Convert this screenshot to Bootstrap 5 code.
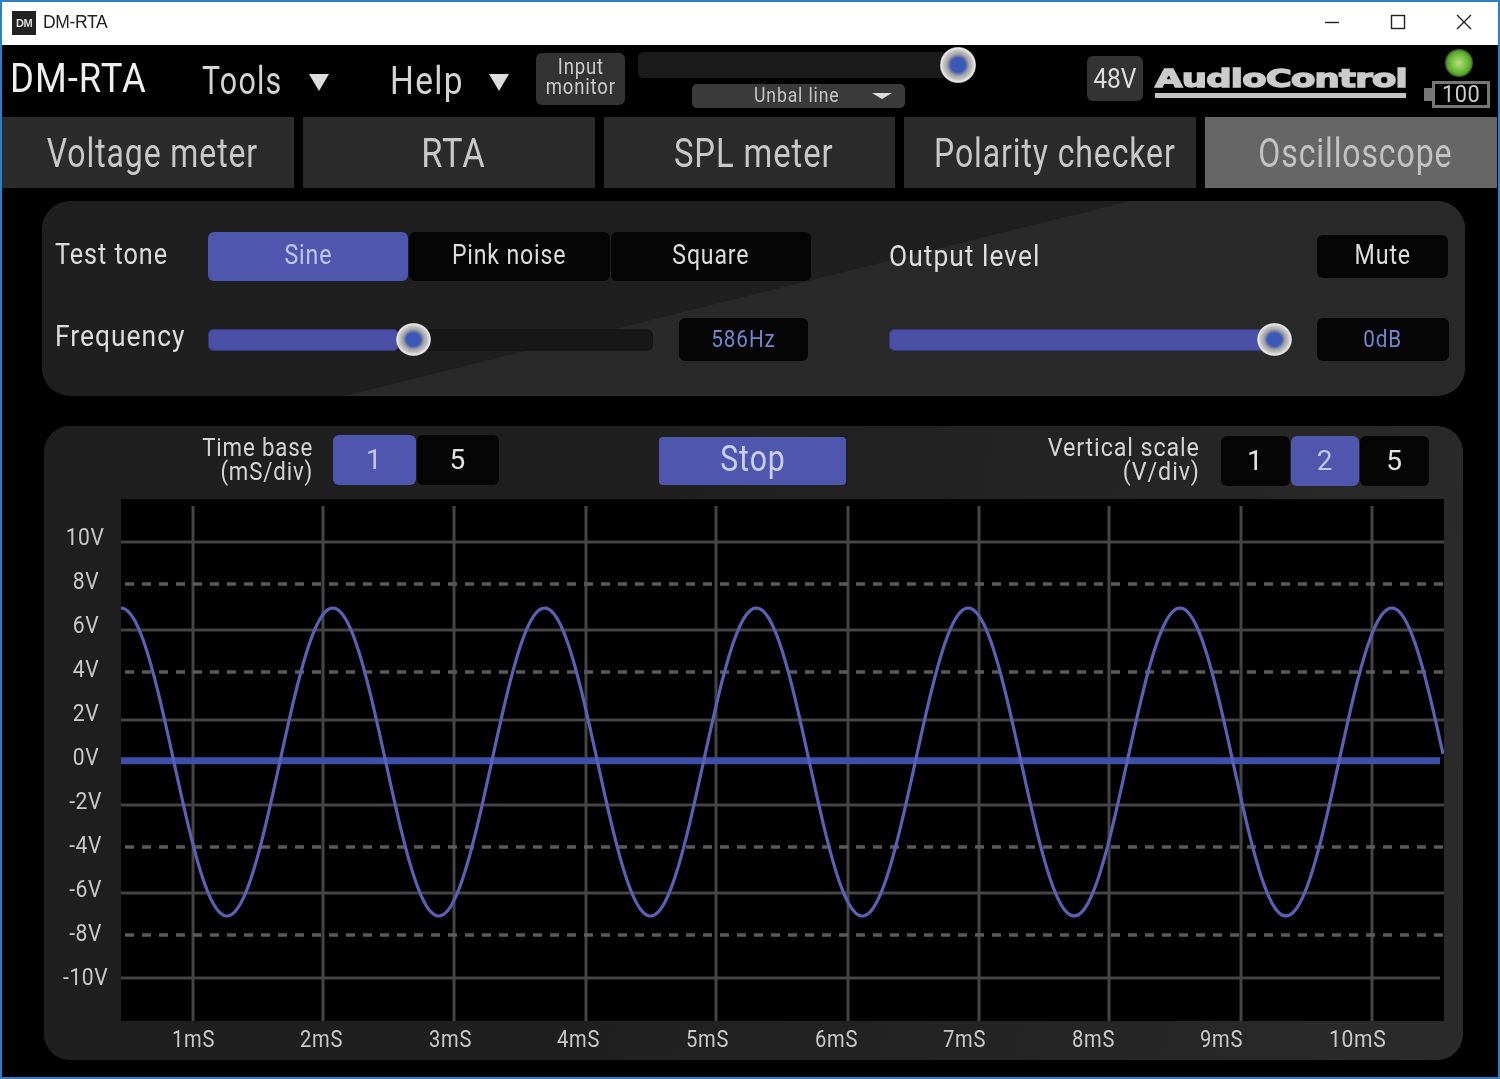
<!doctype html>
<html lang="en">
<head>
<meta charset="utf-8">
<title>DM-RTA</title>
<link href="https://cdn.jsdelivr.net/npm/bootstrap@5.3.0/dist/css/bootstrap.min.css" rel="stylesheet">
<style>
html,body{margin:0;height:100%;background:#000;overflow:hidden}
body{font-family:"Roboto",sans-serif;color:#d6d6d6}
.sq{display:inline-block;white-space:nowrap}
.org-l{transform-origin:left center}
.org-r{transform-origin:right center}
.sx78{transform:scaleX(.78)}
.sx80{transform:scaleX(.80)}
.sx84{transform:scaleX(.84)}
.sx86{transform:scaleX(.86)}
.sx88{transform:scaleX(.88)}
.sx91{transform:scaleX(.91)}
.win{width:1500px;height:1079px;border:2px solid #2f7fc4;background:#000;display:flex;flex-direction:column;overflow:hidden;filter:blur(.55px)}
.titlebar{height:43px;background:#fff;color:#222;flex:none;font-family:"Liberation Sans",sans-serif;font-size:17.5px;letter-spacing:-.35px;padding-left:10px;padding-bottom:2px}
.appicon{width:24px;height:24px;background:#222;color:#ddd;font:bold 11px/24px "Liberation Sans",sans-serif;text-align:center;margin-right:7px;letter-spacing:-.5px}
.wctl{width:66px;display:flex;justify-content:center}
.wctls{margin-bottom:2px;margin-right:1px}
.topbar{height:72px;flex:none;position:relative;padding-left:8px}
.brand{font-size:40px;letter-spacing:1.1px;color:#eee;width:192px;line-height:1;margin-top:-5px}
.menu-item{font-size:38px;letter-spacing:1.5px;color:#d4d4d4;line-height:1;margin-top:-1px}
.mw-tools{width:107px}
.mw-help{width:99px}
.tri{width:0;height:0;border-left:10px solid transparent;border-right:10px solid transparent;border-top:17px solid #ddd;margin-top:3px}
.m-tools{width:188px}
.m-help{width:146px}
.inmon{width:89px;height:52px;background:#333;border-radius:6px;font-size:21.5px;letter-spacing:1px;color:#ccc;text-align:center;margin-top:-5px;padding-bottom:3px}
.inmon-ln{display:block;height:20px;line-height:20px}
.midcol{width:270px;margin-left:13px;position:relative;height:72px}
.toptrack{position:absolute;left:0;top:7px;width:312px;height:26px;background:#1a1a1a;border-radius:5px}
.knob{position:absolute;width:36px;height:36px;border-radius:50%;background:radial-gradient(closest-side,#3c58b8 0 40%,#6d7ca8 50%,#a5a5a5 62%,#c4c4c4 80%,#ececec 94%,#9a9a9a 100%)}
.topknob{left:302px;top:2px}
.unbal{position:absolute;left:54px;top:39px;width:213px;height:24px;background:#3a3a3a;border-radius:5px;font-size:20.5px;letter-spacing:1px;color:#c6c6c6;line-height:23px;padding-left:62px}
.tri-s{position:absolute;right:13px;top:9px;width:0;height:0;border-left:10px solid transparent;border-right:10px solid transparent;border-top:6px solid #ddd}
.v48{position:absolute;left:1085px;top:11px;width:56px;height:45px;background:#333;border-radius:6px;font-size:27px;color:#ddd;text-align:center;line-height:46px}
.logo{position:absolute;left:1153px;top:21px;color:#cbcbcb;font:bold 25.5px/25px "DejaVu Sans",sans-serif;letter-spacing:-.55px;white-space:nowrap;-webkit-text-stroke:1.4px #cbcbcb;transform:scaleX(1.39);transform-origin:left center}
.logo-rule{position:absolute;left:1153px;top:48px;width:251px;height:5px;background:#c4c4c4}
.led{position:absolute;left:1443px;top:4px;width:28px;height:28px;border-radius:50%;background:radial-gradient(closest-side,#bcdc80 0,#78c444 50%,#5aa632 82%,#2c5a1c 100%)}
.batt{position:absolute;left:1430px;top:36px;width:58px;height:27px;border:3px solid #777;font-size:24px;line-height:21px;color:#ccc;text-align:center;letter-spacing:.6px}
.batt-tip{position:absolute;left:1422px;top:43px;width:8px;height:13px;background:#777}
.tabs{height:71px;flex:none;display:flex;gap:9px;padding-right:1px}
.tabb{flex:1 1 0;min-width:0;background:#2b2b2b;color:#c8c8c8;font-size:41px;letter-spacing:1.15px;display:flex;align-items:center;justify-content:center;border:0;border-radius:0;padding:2px 0 0 9px}
.tabb.act{background:#666;color:#c2c2c2}
.panel1{position:relative;margin:13px 33px 0 40px;height:195px;border-radius:28px;background:#1f1f1f;overflow:hidden;flex:none}
.panel1::before{content:"";position:absolute;inset:0;background:#292929;clip-path:polygon(1088px 0,100% 0,100% 100%,303px 100%)}
.line1{position:relative;display:flex;align-items:center;height:49px;margin-top:31px;padding-left:13px}
.line2{position:relative;display:flex;align-items:center;height:43px;margin-top:37px;padding-left:13px}
.lbl{font-size:30px;letter-spacing:1.15px;color:#ddd;width:153px;line-height:1;margin-top:-6px;flex:none}
.lbl-out{margin-left:78px;width:300px;margin-top:-2px}
.lbl-f{margin-top:-8px}
.seg{display:flex;width:603px;height:49px;gap:1px}
.segb{flex:1 1 0;min-width:0;background:#050505;border:0;border-radius:6px;color:#ddd;font-size:27.5px;letter-spacing:1px;padding:0 0 3px;line-height:1;display:flex;align-items:center;justify-content:center}
.segb.on{background:#4f56ad;color:#c3c8f5}
.slid{position:relative;height:22px;border-radius:6px;background:#171717;flex:none}
.slid .fill{height:100%;border-radius:6px;background:#4a50a6;box-shadow:inset 0 0 0 1px #34397e}
.slid .knob{top:-6px;width:35px;height:33px}
.s-freq{width:445px}
.s-out{width:386px;margin-left:81px}
.valbox{background:#050505;border-radius:6px;color:#6f88cf;font-size:24px;letter-spacing:1.1px;text-align:center;line-height:42px;height:43px;flex:none}
.v-freq{width:129px;margin-left:26px}
.v-out{width:132px;margin-left:auto;margin-right:16px}
.mute{width:131px;height:43px;background:#050505;border-radius:6px;color:#ddd;font-size:27px;letter-spacing:1px;text-align:center;line-height:41px;margin-left:auto;margin-right:17px}
.panel2{position:relative;margin:30px 35px 0 42px;height:634px;border-radius:26px;background:linear-gradient(100deg,#1f1f1f 0 40%,#242424 70%,#2b2b2b 100%);overflow:hidden;flex:none}
.tbar{height:73px;position:relative}
.twoln{position:absolute;text-align:right;font-size:26.5px;letter-spacing:1px;color:#d4d4d4;white-space:nowrap}
.twoln div{height:24px;line-height:24px}
.tl-time{right:1150px;top:9px}
.tl-vert{right:263px;top:9px}
.segn{position:absolute;display:flex;gap:1px;height:50px}
.sg-time{left:289px;top:9px;width:166px}
.sg-vert{left:1177px;top:10px;width:208px}
.segn .segb{font-size:28px;color:#e4e4e4;padding:0}
.segn .segb.on{color:#c3c8f5}
.stop{position:absolute;left:615px;top:11px;width:187px;height:48px;background:#4f56ad;color:#ccd0f5;border:0;border-radius:4px;font-size:36px;letter-spacing:1.1px;padding:0 0 4px;line-height:1}
.plotrow{display:flex;height:522px}
.ylabs{width:77px;flex:none;display:flex;flex-direction:column;align-items:center;padding-top:25px;padding-left:6px;color:#c9c9c9;font-size:24px;letter-spacing:.6px}
.ylabs > span{height:44px;line-height:26px}
.plot{width:1323px;height:522px;background:#000;display:block}
.xlabs{display:flex;padding-left:85px;color:#c9c9c9;font-size:24px;letter-spacing:.8px;margin-top:5px}
.xlabs > span{width:128.6px;text-align:center;line-height:26px}
.xlabs > span:last-child{margin-left:7px}
</style>
</head>
<body>
<div class="win">
  <div class="titlebar d-flex align-items-center">
    <div class="appicon">DM</div><span>DM-RTA</span>
    <div class="ms-auto d-flex wctls">
      <div class="wctl"><svg width="16" height="16" viewBox="0 0 16 16"><path d="M1 8.5h14" stroke="#222" stroke-width="1.4"/></svg></div>
      <div class="wctl"><svg width="16" height="16" viewBox="0 0 16 16"><rect x="1.5" y="1.5" width="13" height="13" fill="none" stroke="#222" stroke-width="1.4"/></svg></div>
      <div class="wctl"><svg width="16" height="16" viewBox="0 0 16 16"><path d="M1 1l14 14M15 1L1 15" stroke="#222" stroke-width="1.4"/></svg></div>
    </div>
  </div>
  <div class="topbar d-flex align-items-center">
    <div class="brand"><span class="sq org-l sx91">DM-RTA</span></div>
    <div class="m-tools d-flex align-items-center"><span class="menu-item mw-tools"><span class="sq org-l sx80">Tools</span></span><span class="tri"></span></div>
    <div class="m-help d-flex align-items-center"><span class="menu-item mw-help"><span class="sq org-l sx88">Help</span></span><span class="tri"></span></div>
    <div class="inmon d-flex flex-column justify-content-center"><span class="inmon-ln"><span class="sq sx86">Input</span></span><span class="inmon-ln"><span class="sq sx86">monitor</span></span></div>
    <div class="midcol">
      <div class="toptrack"></div><div class="knob topknob"></div>
      <div class="unbal"><span class="sq org-l sx86">Unbal line</span><span class="tri-s"></span></div>
    </div>
    <div class="v48"><span class="sq sx91">48V</span></div>
    <div class="logo">AudioControl</div>
    <div class="logo-rule"></div>
    <div class="led"></div>
    <div class="batt-tip"></div>
    <div class="batt"><span class="sq sx91">100</span></div>
  </div>
  <div class="tabs">
    <button class="tabb btn"><span class="sq sx78">Voltage meter</span></button>
    <button class="tabb btn"><span class="sq sx84">RTA</span></button>
    <button class="tabb btn"><span class="sq sx80">SPL meter</span></button>
    <button class="tabb btn"><span class="sq sx78">Polarity checker</span></button>
    <button class="tabb btn act"><span class="sq sx78">Oscilloscope</span></button>
  </div>
  <div class="panel1">
    <div class="line1">
      <div class="lbl"><span class="sq org-l sx84">Test tone</span></div>
      <div class="seg"><button class="segb btn on"><span class="sq sx84">Sine</span></button><button class="segb btn"><span class="sq sx84">Pink noise</span></button><button class="segb btn"><span class="sq sx84">Square</span></button></div>
      <div class="lbl lbl-out"><span class="sq org-l sx88">Output level</span></div>
      <div class="mute"><span class="sq sx86">Mute</span></div>
    </div>
    <div class="line2">
      <div class="lbl lbl-f"><span class="sq org-l sx88">Frequency</span></div>
      <div class="slid s-freq"><div class="fill" style="width:43%"></div><div class="knob" style="left:188px"></div></div>
      <div class="valbox v-freq"><span class="sq sx86">586Hz</span></div>
      <div class="slid s-out"><div class="fill" style="width:100%"></div><div class="knob" style="left:368px"></div></div>
      <div class="valbox v-out"><span class="sq sx86">0dB</span></div>
    </div>
  </div>
  <div class="panel2">
    <div class="tbar">
      <div class="twoln tl-time org-r sx84"><div>Time base</div><div>(mS/div)</div></div>
      <div class="segn sg-time"><button class="segb btn on">1</button><button class="segb btn">5</button></div>
      <button class="stop btn"><span class="sq sx84">Stop</span></button>
      <div class="twoln tl-vert org-r sx88"><div>Vertical scale</div><div>(V/div)</div></div>
      <div class="segn sg-vert"><button class="segb btn">1</button><button class="segb btn on">2</button><button class="segb btn">5</button></div>
    </div>
    <div class="plotrow">
      <div class="ylabs"><span><span class="sq sx88">10V</span></span><span><span class="sq sx88">8V</span></span><span><span class="sq sx88">6V</span></span><span><span class="sq sx88">4V</span></span><span><span class="sq sx88">2V</span></span><span><span class="sq sx88">0V</span></span><span><span class="sq sx88">-2V</span></span><span><span class="sq sx88">-4V</span></span><span><span class="sq sx88">-6V</span></span><span><span class="sq sx88">-8V</span></span><span><span class="sq sx88">-10V</span></span></div>
      <svg class="plot" viewBox="121 499 1323 522">
        <g stroke="#444" stroke-width="3" fill="none">
          <path d="M193 506V1021M323 506V1021M454 506V1021M586 506V1021M716 506V1021M848 506V1021M979 506V1021M1109 506V1021M1241 506V1021M1372 506V1021"/>
          <path d="M121 542H1444M121 630H1444M121 720H1444M121 805H1444M121 893H1444M121 978H1440"/>
          <path stroke="#5a5a5a" stroke-width="3.5" stroke-dasharray="9 8" stroke-dashoffset="-4" d="M121 584H1444M121 672H1444M121 847H1444M121 935H1444"/>
        </g>
        <path d="M121 760.7H1440" stroke="#3f4fa8" stroke-width="7"/>
        <path id="wave" fill="none" stroke="#5a60b4" stroke-width="3.2"/>
      </svg>
    </div>
    <div class="xlabs"><span><span class="sq sx84">1mS</span></span><span><span class="sq sx84">2mS</span></span><span><span class="sq sx84">3mS</span></span><span><span class="sq sx84">4mS</span></span><span><span class="sq sx84">5mS</span></span><span><span class="sq sx84">6mS</span></span><span><span class="sq sx84">7mS</span></span><span><span class="sq sx84">8mS</span></span><span><span class="sq sx84">9mS</span></span><span><span class="sq sx88">10mS</span></span></div>
  </div>
</div>
<script>
var d = "";
for (var x = 121; x <= 1444; x += 2) {
  var y = 762 - 154 * Math.cos((x - 121) / 211.8 * 2 * Math.PI);
  d += (d ? "L" : "M") + x + " " + y.toFixed(1);
}
document.getElementById("wave").setAttribute("d", d);
</script>
<script src="https://cdn.jsdelivr.net/npm/bootstrap@5.3.0/dist/js/bootstrap.bundle.min.js"></script>
</body>
</html>
